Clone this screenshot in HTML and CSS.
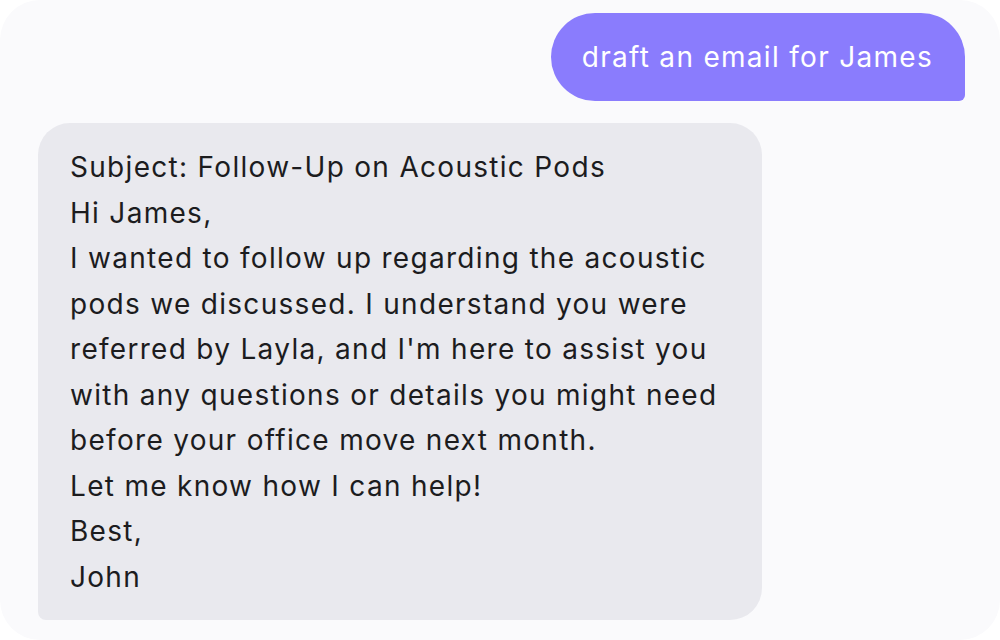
FILE: index.html
```html
<!DOCTYPE html>
<html lang="en">
<head>
    <meta charset="UTF-8">
    <meta name="viewport" content="width=device-width, initial-scale=1.0">
    <title>Chat</title>
    <link rel="stylesheet" href="styles.css">
</head>
<body>
    <div class="chat-panel">
        <div class="chat-bubble user">draft an email for James</div>

        <div class="chat-bubble ai">
            <p>Subject: Follow-Up on Acoustic Pods</p>
            <p>Hi James,</p>
            <p>I wanted to follow up regarding the acoustic pods we discussed. I understand you were referred by Layla, and I'm here to assist you with any questions or details you might need before your office move next month.</p>
            <p>Let me know how I can help!</p>
            <p>Best,</p>
            <p>John</p>
        </div>
    </div>
</body>
</html>
```

FILE: styles.css
```css
/* General Styles */
body {
    font-family: 'Inter', 'Noto Sans', sans-serif;
    background-color: #ffffff;
    margin: 0;
    height: 100vh;
    overflow: hidden;
}

/* Chat Panel */
.chat-panel {
    height: 640px;
    box-sizing: border-box;
    background-color: #fafafc;
    border-radius: 40px;
    padding: 13px 35px 0 38px;
    display: flex;
    flex-direction: column;
    gap: 22px;
}

/* Chat Bubbles */
.chat-bubble {
    box-sizing: border-box;
    font-size: 28px;
    letter-spacing: 1.3px;
}

.chat-bubble.user {
    align-self: flex-end;
    background-color: #8a7cfd;
    color: #ffffff;
    line-height: 88px;
    height: 88px;
    padding: 0 32px 0 31px;
    border-radius: 44px 44px 6px 44px;
}

.chat-bubble.ai {
    align-self: flex-start;
    width: 724px;
    background-color: #e9e9ee;
    color: #1c1c1e;
    line-height: 45.5px;
    padding: 22px 32px 20px 32px;
    border-radius: 32px 32px 32px 8px;
}

.chat-bubble.ai p {
    margin: 0;
}
```
